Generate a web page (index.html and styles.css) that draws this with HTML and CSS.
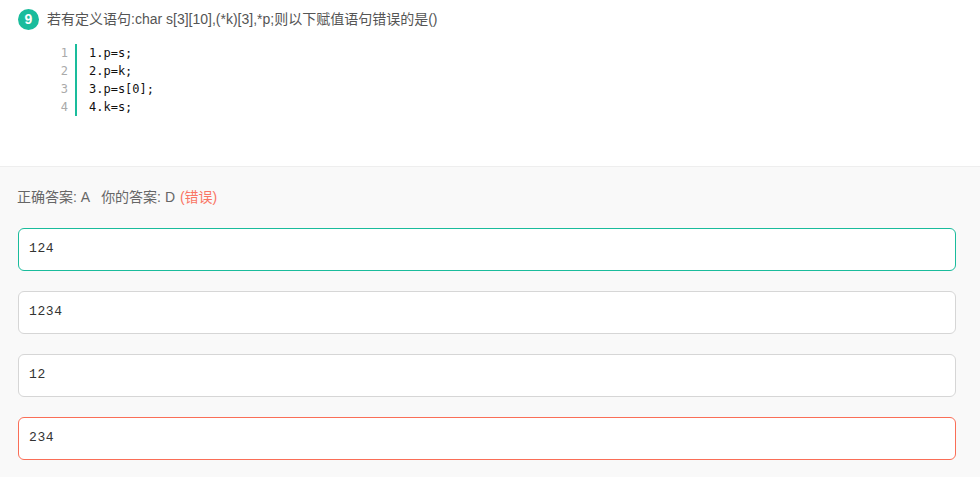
FILE: index.html
```html
<!DOCTYPE html>
<html>
<head>
  <title>题目</title>
  <meta name="viewport" content="width=device-width, initial-scale=1.0">
  <link rel="stylesheet" href="styles.css">
</head>
<body>
  <div class="question">
    <div class="title">
      <span class="num">9</span>
      <span class="title-text">若有定义语句:char s[3][10],(*k)[3],*p;则以下赋值语句错误的是()</span>
    </div>
    <div class="code">
      <div class="line-nums">
        <span>1</span>
        <span>2</span>
        <span>3</span>
        <span>4</span>
      </div>
      <div class="code-lines">
        <span>1.p=s;</span>
        <span>2.p=k;</span>
        <span>3.p=s[0];</span>
        <span>4.k=s;</span>
      </div>
    </div>
  </div>
  <div class="answers">
    <p class="result">正确答案: A<span class="yours">你的答案: D</span> <span class="wrong">(错误)</span></p>
    <div class="option right">124</div>
    <div class="option">1234</div>
    <div class="option">12</div>
    <div class="option bad">234</div>
  </div>
</body>
</html>
```

FILE: styles.css
```css
html, body {
  margin: 0;
  padding: 0;
}
body {
  font-family: "Liberation Sans", Arial, "Noto Sans CJK SC", sans-serif;
  font-size: 14px;
  color: #666;
  background: #fff;
}
.question {
  height: 166px;
  padding: 9px 18px 0;
  box-sizing: border-box;
}
.title {
  display: flex;
  align-items: center;
  height: 21px;
}
.num {
  width: 21px;
  height: 21px;
  border-radius: 50%;
  background: #1abc9c;
  color: #fff;
  font-size: 14px;
  font-weight: bold;
  line-height: 21px;
  text-align: center;
  margin-right: 8px;
}
.title-text {
  color: #555;
  line-height: 21px;
}
.code {
  display: flex;
  margin-top: 14px;
  margin-left: 33px;
  font-family: "DejaVu Sans Mono", "Liberation Mono", monospace;
  font-size: 12px;
  line-height: 18px;
}
.line-nums {
  display: flex;
  flex-direction: column;
  width: 17px;
  padding-right: 7px;
  text-align: right;
  color: #aaa;
  border-right: 2px solid #1abc9c;
}
.code-lines {
  display: flex;
  flex-direction: column;
  padding-left: 12px;
  color: #111;
}
.answers {
  height: 311px;
  box-sizing: border-box;
  padding: 0 24px 0 18px;
  background: #f9f9f9;
  border-top: 1px solid #eee;
  overflow: hidden;
}
.result {
  margin: 21px 0 0 -1px;
  line-height: 18px;
  color: #666;
}
.yours {
  margin-left: 11px;
}
.wrong {
  margin-left: 1px;
  color: #fa7564;
}
.option {
  height: 43px;
  box-sizing: border-box;
  margin-top: 20px;
  padding-left: 10px;
  border: 1px solid #d6d6d6;
  border-radius: 6px;
  background: #fff;
  font-family: "Liberation Mono", monospace;
  font-size: 13px;
  letter-spacing: 0.6px;
  line-height: 40px;
  color: #333;
}
.result + .option {
  margin-top: 22px;
}
.option.right {
  border-color: #1abc9c;
}
.option.bad {
  border-color: #fa6e57;
}
```
